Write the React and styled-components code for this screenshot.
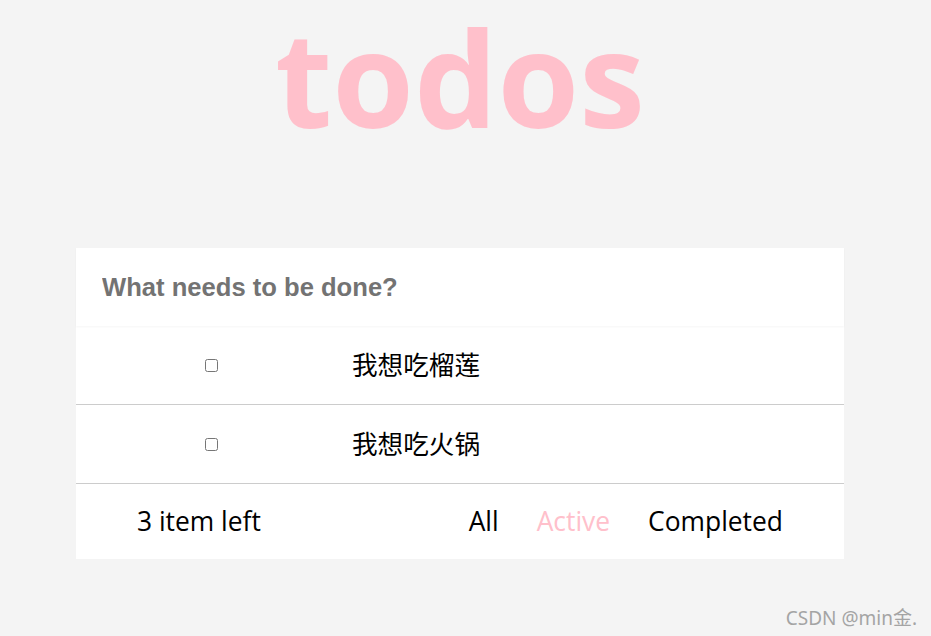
import styled, { createGlobalStyle } from "styled-components";

const GlobalStyle = createGlobalStyle`
  body {
    margin: 0;
    background: #f4f4f4;
    font-family: "Open Sans", "Noto Sans CJK SC", sans-serif;
  }
`;

const Page = styled.div`
  width: 920px;
  min-height: 636px;
  position: relative;
  overflow: hidden;
`;

const Title = styled.h1`
  margin: 0;
  height: 248px;
  text-align: center;
  font-family: "Open Sans", "Noto Sans CJK SC", sans-serif;
  font-weight: 700;
  font-size: 132px;
  line-height: 154px;
  color: #ffc0cb;
`;

const Card = styled.div`
  width: 768px;
  margin: 0 auto;
  background: #fff;
`;

const NewTodo = styled.input`
  display: block;
  position: relative;
  box-sizing: border-box;
  width: 100%;
  height: 78px;
  border: none;
  padding: 0 26px;
  outline: none;
  background: #fff;
  box-shadow: 0 1px 2px rgba(0, 0, 0, 0.04);
  font-family: "Liberation Sans", Arial, sans-serif;
  font-weight: 700;
  font-size: 25.6px;

  &::placeholder {
    color: #737373;
  }
`;

const Row = styled.div`
  display: grid;
  grid-template-columns: 270px 1fr;
  align-items: center;
  box-sizing: border-box;
  height: 79px;
  border-bottom: 1px solid #cccccc;
`;

const CheckCell = styled.div`
  display: flex;
  justify-content: center;
  input {
    margin: 0;
    width: 13px;
    height: 13px;
  }
`;

const TodoText = styled.span`
  padding-left: 6px;
  padding-bottom: 3px;
  font-size: 25.6px;
  color: #000;
  font-family: "Noto Sans CJK SC", sans-serif;
`;

const Footer = styled.div`
  display: flex;
  justify-content: space-between;
  align-items: center;
  box-sizing: border-box;
  height: 75px;
  padding: 0 61px 2px;
  font-size: 26.4px;
  color: #000;
`;

const Filters = styled.div`
  display: flex;
  gap: 38px;
`;

const Filter = styled.span`
  color: ${(p) => (p.$active ? "#ffc0cb" : "#000")};
  cursor: pointer;
`;

const Watermark = styled.div`
  position: absolute;
  right: 3px;
  bottom: 5px;
  font-family: "Noto Sans", "Noto Sans CJK SC", sans-serif;
  font-size: 19px;
  color: #a4a4a4;
`;

const todos = ["我想吃榴莲", "我想吃火锅"];

export default function App() {
  return (
    <Page>
      <GlobalStyle />
      <Title>todos</Title>
      <Card>
        <NewTodo placeholder="What needs to be done?" />
        {todos.map((t) => (
          <Row key={t}>
            <CheckCell>
              <input type="checkbox" />
            </CheckCell>
            <TodoText>{t}</TodoText>
          </Row>
        ))}
        <Footer>
          <span>3 item left</span>
          <Filters>
            <Filter>All</Filter>
            <Filter $active>Active</Filter>
            <Filter>Completed</Filter>
          </Filters>
        </Footer>
      </Card>
      <Watermark>CSDN @min金.</Watermark>
    </Page>
  );
}
